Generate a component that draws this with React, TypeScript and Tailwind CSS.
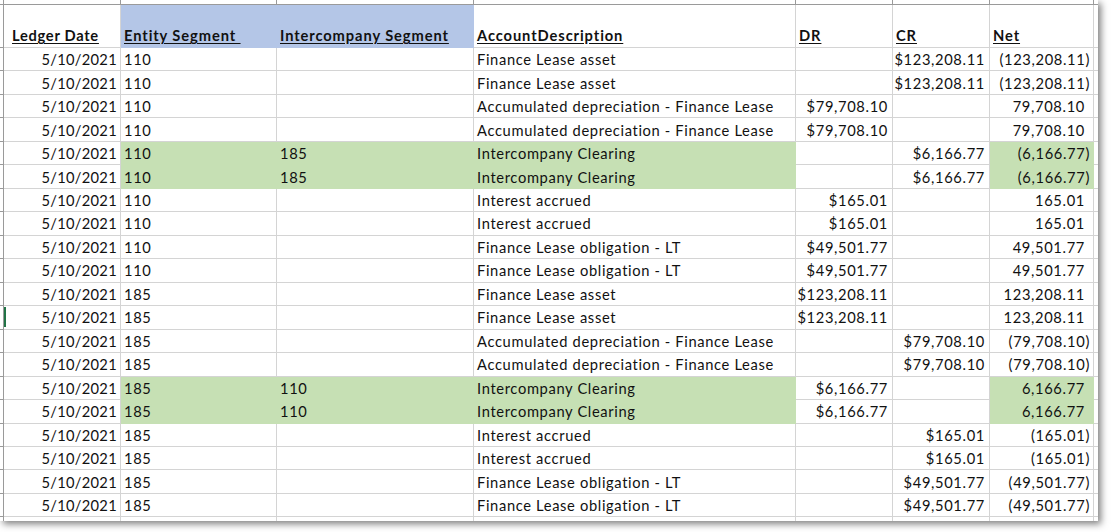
import React from "react";

type Row = {
  e: string;
  ic: string;
  desc: string;
  dr: string;
  cr: string;
  net: string;
  neg: boolean;
  green: boolean;
};

const base: Omit<Row, "green">[] = [
  { e: "110", ic: "", desc: "Finance Lease asset", dr: "", cr: "$123,208.11", net: "(123,208.11)", neg: true },
  { e: "110", ic: "", desc: "Finance Lease asset", dr: "", cr: "$123,208.11", net: "(123,208.11)", neg: true },
  { e: "110", ic: "", desc: "Accumulated depreciation - Finance Lease", dr: "$79,708.10", cr: "", net: "79,708.10", neg: false },
  { e: "110", ic: "", desc: "Accumulated depreciation - Finance Lease", dr: "$79,708.10", cr: "", net: "79,708.10", neg: false },
  { e: "110", ic: "185", desc: "Intercompany Clearing", dr: "", cr: "$6,166.77", net: "(6,166.77)", neg: true },
  { e: "110", ic: "185", desc: "Intercompany Clearing", dr: "", cr: "$6,166.77", net: "(6,166.77)", neg: true },
  { e: "110", ic: "", desc: "Interest accrued", dr: "$165.01", cr: "", net: "165.01", neg: false },
  { e: "110", ic: "", desc: "Interest accrued", dr: "$165.01", cr: "", net: "165.01", neg: false },
  { e: "110", ic: "", desc: "Finance Lease obligation - LT", dr: "$49,501.77", cr: "", net: "49,501.77", neg: false },
  { e: "110", ic: "", desc: "Finance Lease obligation - LT", dr: "$49,501.77", cr: "", net: "49,501.77", neg: false },
  { e: "185", ic: "", desc: "Finance Lease asset", dr: "$123,208.11", cr: "", net: "123,208.11", neg: false },
  { e: "185", ic: "", desc: "Finance Lease asset", dr: "$123,208.11", cr: "", net: "123,208.11", neg: false },
  { e: "185", ic: "", desc: "Accumulated depreciation - Finance Lease", dr: "", cr: "$79,708.10", net: "(79,708.10)", neg: true },
  { e: "185", ic: "", desc: "Accumulated depreciation - Finance Lease", dr: "", cr: "$79,708.10", net: "(79,708.10)", neg: true },
  { e: "185", ic: "110", desc: "Intercompany Clearing", dr: "$6,166.77", cr: "", net: "6,166.77", neg: false },
  { e: "185", ic: "110", desc: "Intercompany Clearing", dr: "$6,166.77", cr: "", net: "6,166.77", neg: false },
  { e: "185", ic: "", desc: "Interest accrued", dr: "", cr: "$165.01", net: "(165.01)", neg: true },
  { e: "185", ic: "", desc: "Interest accrued", dr: "", cr: "$165.01", net: "(165.01)", neg: true },
  { e: "185", ic: "", desc: "Finance Lease obligation - LT", dr: "", cr: "$49,501.77", net: "(49,501.77)", neg: true },
  { e: "185", ic: "", desc: "Finance Lease obligation - LT", dr: "", cr: "$49,501.77", net: "(49,501.77)", neg: true },
];

const rows: Row[] = base.map((r, i) => ({ ...r, green: i === 4 || i === 5 || i === 14 || i === 15 }));

const font = "font-['Lato','Open_Sans',sans-serif] text-[14.7px] text-[#111]";

const W = {
  rh: "w-[4px]",
  a: "w-[117px]",
  b: "w-[156px]",
  c: "w-[197px]",
  d: "w-[322px]",
  e: "w-[97px]",
  f: "w-[97px]",
  g: "w-[104px]",
};

const grid = "border-r border-b border-[#d4d4d4]";
const greenCell = "border-r border-b border-[#c6e0b4] bg-[#c6e0b4]";
const blueCell = "border-r border-b border-[#b4c6e7] bg-[#b4c6e7]";

function HeaderCell({ w, cls, label }: { w: string; cls: string; label: string }) {
  return (
    <div
      className={`${w} ${cls} h-full shrink-0 flex items-end pl-[3px] pb-[1px] font-bold underline underline-offset-[2px] whitespace-pre tracking-[0.9px]`}
    >
      {label}
    </div>
  );
}

export default function App() {
  return (
    <div className="w-[1111px] h-[532px] bg-white overflow-hidden">
      <div className={`w-[1098px] h-[521px] bg-white overflow-hidden shadow-[3px_3px_7px_rgba(0,0,0,0.5)] ${font}`}>
        {/* cropped column header strip */}
        <div className="flex h-[5px]">
          <div className={`${W.rh} shrink-0 border-r border-b border-[#9a9a9a]`} />
          <div className={`${W.a} shrink-0 border-r border-b border-[#9a9a9a]`} />
          <div className={`${W.b} shrink-0 border-r border-b border-[#9a9a9a]`} />
          <div className={`${W.c} shrink-0 border-r border-b border-[#9a9a9a]`} />
          <div className={`${W.d} shrink-0 border-r border-b border-[#9a9a9a]`} />
          <div className={`${W.e} shrink-0 border-r border-b border-[#9a9a9a]`} />
          <div className={`${W.f} shrink-0 border-r border-b border-[#9a9a9a]`} />
          <div className={`${W.g} shrink-0 border-r border-b border-[#9a9a9a]`} />
          <div className="flex-1 border-b border-[#9a9a9a]" />
        </div>
        {/* header row */}
        <div className="flex h-[43px]">
          <div className={`${W.rh} shrink-0 h-full border-r border-b border-[#9a9a9a]`} />
          <div
            className={`${W.a} ${grid} h-full shrink-0 flex items-end pl-[8px] pb-[1px] font-bold underline underline-offset-[2px] tracking-[0.7px]`}
          >
            Ledger Date
          </div>
          <HeaderCell w={W.b} cls={blueCell} label={"Entity Segment "} />
          <HeaderCell w={W.c} cls={blueCell} label="Intercompany Segment" />
          <HeaderCell w={W.d} cls={grid} label="AccountDescription" />
          <HeaderCell w={W.e} cls={grid} label="DR" />
          <HeaderCell w={W.f} cls={grid} label="CR" />
          <HeaderCell w={W.g} cls={grid} label="Net" />
          <div className="flex-1 h-full border-b border-[#d4d4d4]" />
        </div>
        {/* data rows */}
        {rows.map((r, i) => {
          const fill = r.green ? greenCell : grid;
          return (
            <div key={i} className="flex h-[23.47px] tracking-[0.65px]">
              <div className={`${W.rh} shrink-0 h-full border-r border-b border-[#9a9a9a] relative`}>
                {i === 11 && <div className="absolute left-[4px] top-[1px] w-[2px] h-[20px] bg-[#217346]" />}
              </div>
              <div className={`${W.a} ${grid} h-full shrink-0 flex items-center justify-end pr-[3px] tracking-[0.3px]`}>
                5/10/2021
              </div>
              <div className={`${W.b} ${fill} h-full shrink-0 flex items-center pl-[3px]`}>{r.e}</div>
              <div className={`${W.c} ${fill} h-full shrink-0 flex items-center pl-[3px]`}>{r.ic}</div>
              <div className={`${W.d} ${fill} h-full shrink-0 flex items-center pl-[3px] whitespace-nowrap`}>{r.desc}</div>
              <div className={`${W.e} ${grid} h-full shrink-0 flex items-center justify-end pr-[4px]`}>{r.dr}</div>
              <div className={`${W.f} ${grid} h-full shrink-0 flex items-center justify-end pr-[4px]`}>{r.cr}</div>
              <div
                className={`${W.g} ${fill} h-full shrink-0 flex items-center justify-end ${r.neg ? "pr-[3px]" : "pr-[8px]"}`}
              >
                {r.net}
              </div>
              <div className="flex-1 h-full border-b border-[#d4d4d4]" />
            </div>
          );
        })}
        <div className="flex h-[10px]">
          <div className={`${W.rh} shrink-0 h-full border-r border-[#9a9a9a]`} />
          <div className={`${W.a} shrink-0 h-full border-r border-[#d4d4d4]`} />
          <div className={`${W.b} shrink-0 h-full border-r border-[#d4d4d4]`} />
          <div className={`${W.c} shrink-0 h-full border-r border-[#d4d4d4]`} />
          <div className={`${W.d} shrink-0 h-full border-r border-[#d4d4d4]`} />
          <div className={`${W.e} shrink-0 h-full border-r border-[#d4d4d4]`} />
          <div className={`${W.f} shrink-0 h-full border-r border-[#d4d4d4]`} />
          <div className={`${W.g} shrink-0 h-full border-r border-[#d4d4d4]`} />
        </div>
      </div>
    </div>
  );
}
